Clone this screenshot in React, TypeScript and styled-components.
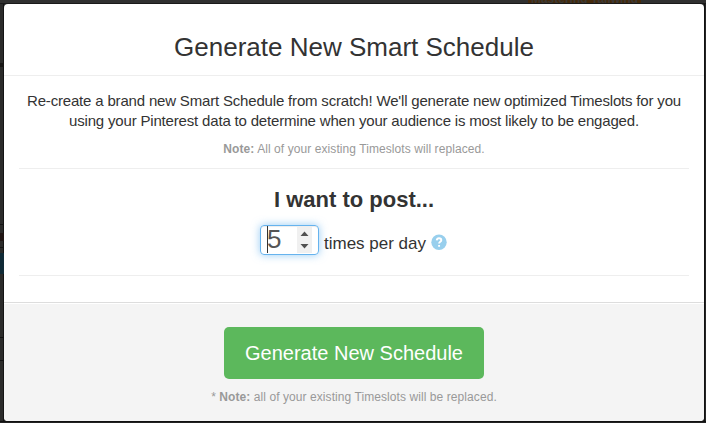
import React from "react";
import styled, { createGlobalStyle } from "styled-components";

const GlobalStyle = createGlobalStyle`
  * { box-sizing: border-box; }
  body {
    margin: 0;
    font-family: "Liberation Sans", Arial, sans-serif;
    color: #333;
    background: #2b2b2a;
  }
`;

const Screen = styled.div`
  display: grid;
  grid-template: 4px 417px 2px / 4px 700px 2px;
  width: 706px;
  height: 423px;
  overflow: hidden;
  background: #2b2b2a;
`;

const TopEdge = styled.div`
  grid-column: 1 / -1;
  padding-left: 528px;
  overflow: hidden;
  background: #303030;
  box-shadow: inset 0 -1px #191919;
`;

const Tag = styled.div`
  display: flex;
  align-items: flex-end;
  justify-content: center;
  width: 113px;
  height: 3px;
  overflow: hidden;
  background: #452a0b;
  color: #3a3835;
  font-size: 12px;
  font-weight: bold;
  line-height: 8px;
  white-space: nowrap;
`;

const LeftEdge = styled.div`
  display: flex;
  flex-direction: column;
  background: #2b2b2a;
  box-shadow: inset -1px 0 #141414;
`;

const Strip = styled.span<{ $gap: number; $height: number; $color: string }>`
  margin-top: ${(p) => p.$gap}px;
  height: ${(p) => p.$height}px;
  background: ${(p) => p.$color};
`;

const RightEdge = styled.div`
  background: #252525;
  box-shadow: inset 1px 0 #111;
`;

const BottomEdge = styled.div`
  grid-column: 1 / -1;
  background: #222;
  box-shadow: inset 0 1px #111;
`;

const Dialog = styled.section`
  display: flex;
  flex-direction: column;
  border-radius: 4px;
  overflow: hidden;
  background: #fff;
  text-align: center;
  white-space: nowrap;
`;

const Header = styled.header`
  height: 72px;
  padding-top: 23px;
  border-bottom: 1px solid #eee;
`;

const Title = styled.h1`
  margin: 0;
  font-size: 26px;
  font-weight: normal;
  line-height: 40px;
`;

const Body = styled.div`
  height: 226px;
  padding: 15px 15px 0;
`;

const Intro = styled.div`
  height: 78px;
  border-bottom: 1px solid #eee;
`;

const Lead = styled.p`
  margin: 0;
  font-size: 15px;
  line-height: 20px;
  letter-spacing: -0.178px;
`;

const Note = styled.p`
  margin: 0;
  padding-top: 8px;
  color: #999;
  font-size: 12px;
  line-height: 20px;
  letter-spacing: 0.075px;
`;

const Frequency = styled.div`
  height: 107px;
  padding-top: 11px;
  border-bottom: 1px solid #eee;
`;

const Subtitle = styled.h2`
  margin: 0;
  font-size: 22px;
  line-height: 40px;
`;

const FieldRow = styled.div`
  display: flex;
  justify-content: center;
  padding: 5px 1px 0 0;
  font-size: 17px;
  line-height: 37px;
`;

const NumberField = styled.div`
  display: flex;
  justify-content: space-between;
  width: 59px;
  height: 30px;
  padding: 0 6px;
  margin-right: 5px;
  border: 1px solid #66b3ee;
  border-radius: 4px;
  box-shadow: 0 0 8px rgba(82, 168, 236, 0.6), inset 0 1px 1px rgba(0, 0, 0, 0.075);
  color: #555;
  font-size: 26px;
  line-height: 27px;
`;

const Value = styled.span`
  height: 27px;
  border-left: 1px solid #333;
  letter-spacing: -1px;
  text-indent: -1px;
`;

const Spinner = styled.svg`
  width: 15px;
  height: 26px;
  margin-top: 1px;
  background: #f0f0f0;
`;

const Help = styled.svg`
  width: 16px;
  height: 16px;
  margin: 9px 0 0 5px;
`;

const Footer = styled.footer`
  flex: 1;
  display: flex;
  flex-direction: column;
  align-items: center;
  padding-top: 24px;
  background: #f4f4f4;
  border-top: 1px solid #ddd;
  box-shadow: inset 0 1px #fff;
`;

const Submit = styled.button`
  width: 260px;
  height: 52px;
  padding: 0;
  border: 0;
  border-radius: 5px;
  background: #5cb85c;
  color: #fff;
  font: 20px/52px "Liberation Sans", Arial, sans-serif;
`;

export default function App() {
  return (
    <>
      <GlobalStyle />
      <Screen>
        <TopEdge>
          <Tag>Mastering Tailwind</Tag>
        </TopEdge>
        <LeftEdge>
          <Strip $gap={59} $height={4} $color="#171615" />
          <Strip $gap={157} $height={1} $color="#151515" />
          <Strip $gap={8} $height={8} $color="#201514" />
          <Strip $gap={6} $height={1} $color="#151515" />
          <Strip $gap={5} $height={21} $color="#102a36" />
          <Strip $gap={63} $height={1} $color="#111" />
          <Strip $gap={22} $height={1} $color="#111" />
        </LeftEdge>
        <Dialog>
          <Header>
            <Title>Generate New Smart Schedule</Title>
          </Header>
          <Body>
            <Intro>
              <Lead>
                Re-create a brand new Smart Schedule from scratch! We'll generate new optimized Timeslots for you
                <br />
                using your Pinterest data to determine when your audience is most likely to be engaged.
              </Lead>
              <Note>
                <b>Note:</b> All of your existing Timeslots will replaced.
              </Note>
            </Intro>
            <Frequency>
              <Subtitle>I want to post...</Subtitle>
              <FieldRow>
                <NumberField>
                  <Value>5</Value>
                  <Spinner viewBox="0 0 15 26">
                    <path d="M3.5 9L7.5 4.5L11.5 9ZM3.5 17L7.5 21.5L11.5 17Z" fill="#505050" />
                  </Spinner>
                </NumberField>
                times per day
                <Help viewBox="0 0 16 16">
                  <circle cx="8" cy="8.3" r="7.7" fill="#98cfed" />
                  <path
                    d="M5.7 6.4C5.9 4.9 6.8 4.3 8 4.3C9.4 4.3 10.3 5.1 10.3 6.2C10.3 7.8 8.1 7.8 8.1 9.6M8.1 10.9V12.7"
                    fill="none"
                    stroke="#fff"
                    strokeWidth="1.9"
                  />
                </Help>
              </FieldRow>
            </Frequency>
          </Body>
          <Footer>
            <Submit>Generate New Schedule</Submit>
            <Note>
              * <b>Note:</b> all of your existing Timeslots will be replaced.
            </Note>
          </Footer>
        </Dialog>
        <RightEdge />
        <BottomEdge />
      </Screen>
    </>
  );
}
